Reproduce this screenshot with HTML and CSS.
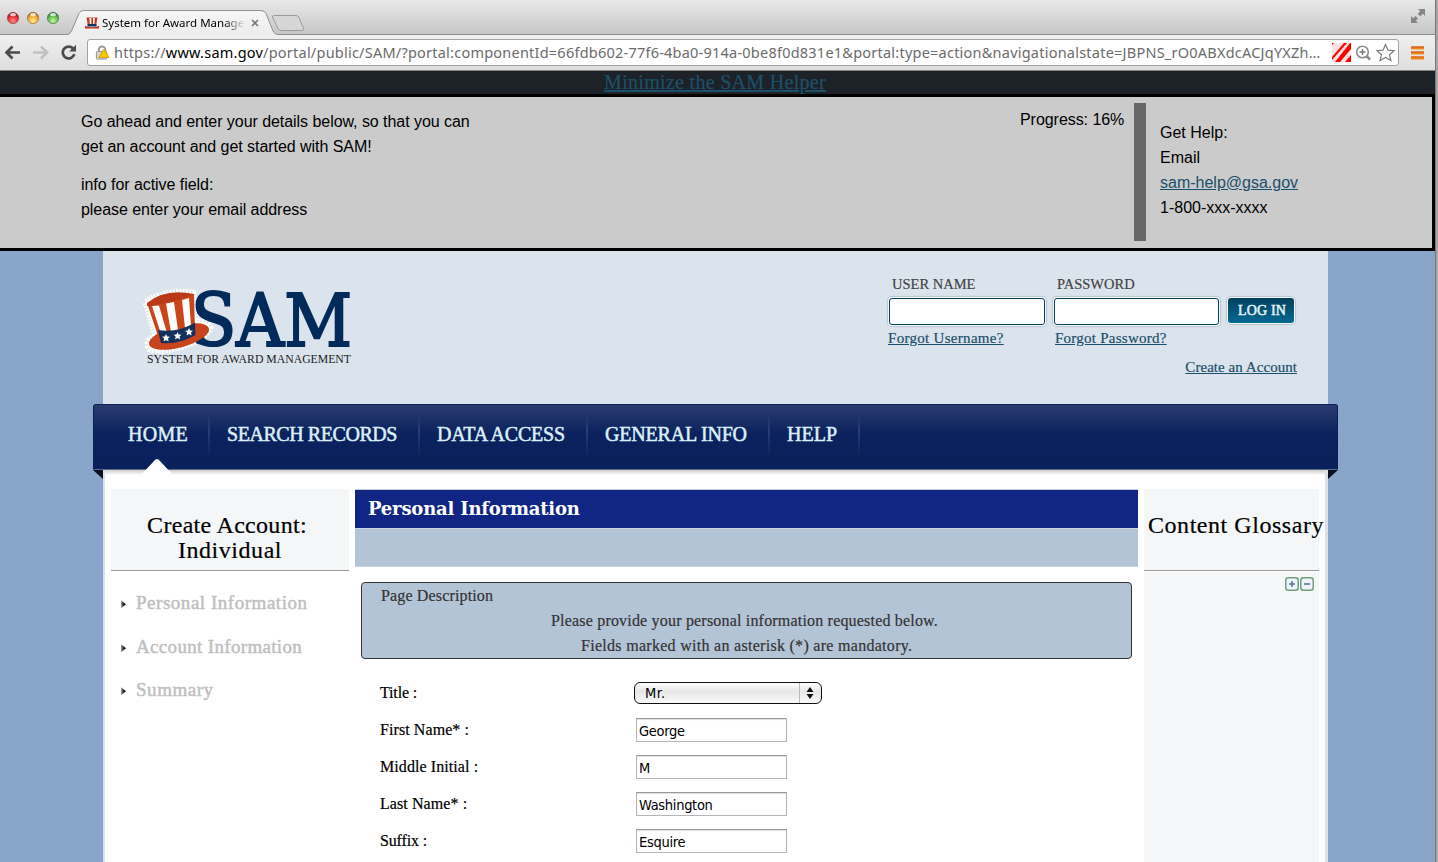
FILE: index.html
```html
<!DOCTYPE html>
<html lang="en">
<head>
<meta charset="utf-8">
<title>System for Award Management</title>
<link rel="stylesheet" href="styles.css">
</head>
<body>
<div class="window">
  <div class="tabstrip">
    <svg class="strip-art" width="330" height="35" viewBox="0 0 330 35">
      <defs>
        <radialGradient id="r" cx=".5" cy=".75" r=".7"><stop offset="0" stop-color="#ff8d86"/><stop offset=".6" stop-color="#e2303a"/><stop offset="1" stop-color="#8e1a1c"/></radialGradient>
        <radialGradient id="y" cx=".5" cy=".75" r=".7"><stop offset="0" stop-color="#ffee90"/><stop offset=".6" stop-color="#f4aa37"/><stop offset="1" stop-color="#a0601a"/></radialGradient>
        <radialGradient id="g" cx=".5" cy=".75" r=".7"><stop offset="0" stop-color="#c8f5a0"/><stop offset=".6" stop-color="#62bd50"/><stop offset="1" stop-color="#2f7430"/></radialGradient>
        <linearGradient id="tab" x1="0" y1="0" x2="0" y2="1"><stop offset="0" stop-color="#f6f6f6"/><stop offset="1" stop-color="#ececec"/></linearGradient>
      </defs>
      <circle cx="13" cy="18" r="5.7" fill="url(#r)" stroke="#8d4040" stroke-width=".6"/>
      <circle cx="33" cy="18" r="5.7" fill="url(#y)" stroke="#94662a" stroke-width=".6"/>
      <circle cx="53" cy="18" r="5.7" fill="url(#g)" stroke="#3b7339" stroke-width=".6"/>
      <ellipse cx="13" cy="14.6" rx="3" ry="1.6" fill="#fff" opacity=".75"/>
      <ellipse cx="33" cy="14.6" rx="3" ry="1.6" fill="#fff" opacity=".75"/>
      <ellipse cx="53" cy="14.6" rx="3" ry="1.6" fill="#fff" opacity=".75"/>
      <path d="M67 34.500Q70 34.500 71.500 31L79 13.500Q80.500 10.500 83.500 10.500H261Q264.500 10.500 266 13.500L273 31Q274.500 34.500 278 34.500V36H67Z" fill="url(#tab)"/>
      <path d="M0 34.500H67Q70 34.500 71.500 31L79 13.500Q80.500 10.500 83.500 10.500H261Q264.500 10.500 266 13.500L273 31Q274.500 34.500 278 34.500H330" fill="none" stroke="#8f8f8f"/>
      <path d="M274.500 15.500H296Q298 15.500 299 17.500L303.500 28.500Q304 30.500 302 30.500H281Q279 30.500 278 28.500L272.500 17.500Q272 15.500 274.500 15.500Z" fill="#d6d6d6" stroke="#9b9b9b"/>
      <path d="M86.500 17.500H97.500L96 26H88Z" fill="#c83a1c"/><path d="M89.500 18H91.300V25H89.800ZM93 18H94.800L94.300 25H93Z" fill="#fff"/><path d="M87.500 24H96.500V26.500H87.500Z" fill="#123464"/><path d="M85 26Q92 28.500 99 26V28.500H85Z" fill="#bb2f1a"/>
      <path d="M252 20L258 26M258 20L252 26" stroke="#777" stroke-width="1.600"/>
    </svg>
    <span class="tab-title">System for Award Manager</span>
    <svg class="expand" width="16" height="16" viewBox="0 0 16 16"><path d="M8 1H15V8L12.800 5.800L10.300 8.300L7.700 5.700L10.200 3.200ZM1 8L3.200 10.200L5.400 8L8 10.600L5.800 12.800L8 15H1Z" fill="#858585"/></svg>
  </div>
  <div class="toolbar">
    <svg class="nav-icons" width="82" height="24" viewBox="0 0 82 24">
      <path d="M12.500 5.500L6.500 11.500L12.500 17.500M7 11.500H20" fill="none" stroke="#4b4b4b" stroke-width="2.700"/>
      <path d="M41 5.500L47 11.500L41 17.500M46.500 11.500H33" fill="none" stroke="#c1c1c1" stroke-width="2.700"/>
      <path d="M73 7.500A5.900 5.900 0 1 0 74.300 13.200" fill="none" stroke="#4b4b4b" stroke-width="2.700"/><path d="M76 3.800V10.500H69.200Z" fill="#4b4b4b"/>
    </svg>
    <div class="omnibox">
      <svg width="16" height="16" viewBox="0 0 16 16"><path d="M4 7V4.500A3.500 3.500 0 0 1 11 4.500V7" fill="none" stroke="#999" stroke-width="2"/><rect x="1.500" y="6.500" width="11" height="8" rx="1" fill="#d9d9d9" stroke="#8b8b8b"/><path d="M9.500 3.800L15 12.800H4Z" fill="#f8c900" stroke="#d9a100"/></svg>
      <span class="url">https://<b>www.sam.gov</b>/portal/public/SAM/?portal:componentId=66fdb602-77f6-4ba0-914a-0be8f0d831e1&amp;portal:type=action&amp;navigationalstate=JBPNS_rO0ABXdcACJqYXZh…</span>
      <svg class="box-icons" width="64" height="20" viewBox="0 0 64 20">
        <rect x="0" y="0" width="19" height="19" fill="#f00"/><path d="M2 0H12L0 14V2ZM0 17L15 0H18L3 19H0ZM8 19L19 6V12L13 19Z" fill="#fff" opacity=".88"/>
        <circle cx="30.500" cy="9" r="5.800" fill="none" stroke="#8b8b8b" stroke-width="1.600"/><path d="M27.500 9H33.500M30.500 6V12" stroke="#777" stroke-width="1.400"/><path d="M34.800 13.300L38 16.500" stroke="#8b8b8b" stroke-width="2.600"/>
        <path d="M53.500 1.500L56 7.200L62 7.700L57.500 11.700L58.900 17.600L53.500 14.500L48.100 17.600L49.500 11.700L45 7.700L51 7.200Z" fill="#fff" stroke="#7c7c7c" stroke-width="1.200"/>
      </svg>
    </div>
    <svg width="14" height="14" viewBox="0 0 14 14"><path d="M0 .500H13V3.500H0ZM0 5.500H13V8.500H0ZM0 10.500H13V13.500H0Z" fill="#f08a1c"/><path d="M0 1H13M0 6H13M0 11H13" stroke="#d5500d"/></svg>
  </div>

  <div class="viewport">
    <div class="helper-bar"><a>Minimize the SAM Helper</a></div>
    <div class="helper">
      <div class="helper-copy">
        <p>Go ahead and enter your details below, so that you can<br>get an account and get started with SAM!</p>
        <p>info for active field:<br>please enter your email address</p>
      </div>
      <div class="progress">Progress: 16%</div>
      <div class="progress-rule"></div>
      <div class="help">Get Help:<br>Email<br><a>sam-help@gsa.gov</a><br>1-800-xxx-xxxx</div>
    </div>

    <div class="page">
      <header class="masthead">
        <svg class="logo" width="216" height="84" viewBox="0 0 216 84">
          <path d="M6 18Q25 6 53 9L56 38Q70 38 70 44Q60 61 24 66Q7 68 8 60Q9 55 16 52Z" fill="#fff" stroke="#fff" stroke-width="7" stroke-dasharray="2 1.200" stroke-linejoin="round"/>
          <text x="51" y="61.500" class="logo-name" textLength="161" lengthAdjust="spacingAndGlyphs">SAM</text>
          <ellipse cx="39" cy="52.500" rx="31" ry="11" transform="rotate(-15 39 52.500)" fill="#c8441c"/>
          <path d="M7 19Q28 7 54 10L55 48Q38 60 20 58Z" fill="#cb451b"/>
          <path d="M12 22L19 21.500L27 49L21 50ZM26 19.500L34 18L38 46L31 48ZM42 16L49 14L51 42L45 44Z" fill="#fff"/>
          <path d="M7 19Q25 4 54 10Q38 18 7 22Z" fill="#b93a17"/>
          <path d="M18 46Q38 49 55 38.500L55.500 51Q38 61 21 59Z" fill="#14305c"/>
          <path id="s" d="M26 50L27.200 52.600L30 52.800L28 54.600L28.600 57.400L26 56L23.600 57.400L24.200 54.600L22 52.800L24.900 52.600Z" fill="#fff"/>
          <use href="#s" x="11.500" y="-2"/><use href="#s" x="23" y="-6"/>
          <text x="7" y="79" class="logo-tag" textLength="204" lengthAdjust="spacingAndGlyphs">SYSTEM FOR AWARD MANAGEMENT</text>
        </svg>
        <div class="login">
          <div class="field user"><label>USER NAME</label><input type="text"><a>Forgot Username?</a></div>
          <div class="field pass"><label>PASSWORD</label><input type="text"><a>Forgot Password?</a></div>
          <div class="login-btn">LOG IN</div>
          <a class="create">Create an Account</a>
        </div>
      </header>
      <nav class="menu">
        <a class="home">HOME<svg class="pointer" width="34" height="18" viewBox="0 0 34 18"><path d="M17 1Q18 1 19 2L34 18H0L15 2Q16 1 17 1Z" fill="#fff"/></svg></a>
        <a class="search">SEARCH RECORDS</a>
        <a class="data">DATA ACCESS</a>
        <a class="info">GENERAL INFO</a>
        <a class="helplink">HELP</a>
        <span class="fold left"></span><span class="fold right"></span>
      </nav>
      <div class="content">
        <aside class="side">
          <h2>Create Account:<br><span class="ind">Individual</span></h2>
          <ul>
            <li><i></i>Personal Information</li>
            <li class="acct"><i></i>Account Information</li>
            <li><i></i>Summary</li>
          </ul>
        </aside>
        <main class="main">
          <h1>Personal Information</h1>
          <div class="subbar"></div>
          <section class="desc">
            <p class="d0">Page Description</p>
            <p class="d1">Please provide your personal information requested below.</p>
            <p class="d2">Fields marked with an asterisk (*) are mandatory.</p>
          </section>
          <form class="form">
            <div class="row"><label class="title">Title :</label><div class="select"><span>Mr.</span><svg width="22" height="20" viewBox="0 0 22 20"><path d="M.500 0V20" stroke="#bbb"/><path d="M11 4L14.500 9H7.500ZM11 16L14.500 11H7.500Z" fill="#111"/></svg></div></div>
            <div class="row"><label>First Name* :</label><input type="text" value="George"></div>
            <div class="row"><label>Middle Initial :</label><input type="text" value="M"></div>
            <div class="row"><label>Last Name* :</label><input type="text" value="Washington"></div>
            <div class="row"><label class="title">Suffix :</label><input type="text" value="Esquire"></div>
          </form>
        </main>
        <aside class="glossary">
          <h2>Content Glossary</h2>
          <div class="toggles">
            <svg width="30" height="14" viewBox="0 0 30 14"><g fill="#eef3fa" stroke="#6fa07a" stroke-width="1.500"><rect x=".8" y=".8" width="12.400" height="12.400" rx="2.500"/><rect x="15.800" y=".8" width="12.400" height="12.400" rx="2.500"/></g><path d="M4 7H10M7 4V10M19 7H25" stroke="#55708f" stroke-width="1.500"/></svg>
          </div>
        </aside>
      </div>
    </div>
  </div>
</div>
</body>
</html>
```

FILE: styles.css
```css
* { box-sizing: border-box; }
body { margin: 0; width: 1438px; height: 862px; overflow: hidden; background: #aaa5a3; font-family: "Liberation Serif", serif; }
p, h1, h2, ul { margin: 0; padding: 0; font-weight: normal; list-style: none; }
.window { width: 1436px; height: 862px; overflow: hidden; border-right: 1px solid #777; display: flex; flex-direction: column; }

/* browser frame */
.tabstrip { position: relative; height: 35px; flex: none; width: 1438px; background: linear-gradient(#e9e9e9, #c6c6c6); border-bottom: 1px solid #8f8f8f; }
.strip-art { position: absolute; left: 0; top: 0; }
.tab-title { position: absolute; left: 102px; top: 15px; width: 146px; white-space: nowrap; font: 11.5px/16px "Noto Sans", sans-serif; -webkit-mask-image: linear-gradient(90deg, #000 122px, transparent 143px); mask-image: linear-gradient(90deg, #000 122px, transparent 143px); }
.expand { position: absolute; left: 1410px; top: 8px; }
.toolbar { height: 36px; flex: none; display: flex; align-items: center; background: linear-gradient(#efefef, #dedede); border-bottom: 1px solid #858585; }
.nav-icons { flex: none; margin-right: 5px; }
.omnibox { width: 1312px; height: 27px; margin-right: 12px; padding: 0 2px 0 7px; display: flex; align-items: center; background: #fff; border: 1px solid #a2a2a2; border-radius: 3px; }
.url { width: 1209px; margin: 0 9px 1px 4px; flex: none; white-space: nowrap; font: 14.5px/20px "Noto Sans", sans-serif; letter-spacing: .228px; color: #6b6b6b; }
.url b { font-weight: normal; color: #000; }
.box-icons { flex: none; }

/* helper panel */
.viewport { width: 1435px; flex: 1; background: repeating-conic-gradient(#8ba1c2 0 25%, #85a9d0 0 50%) 0 0 / 4px 4px; }
.helper-bar { height: 23px; background: #1c2228; text-align: center; padding-right: 5px; }
.helper-bar a { font-size: 20px; line-height: 23px; letter-spacing: .3px; color: #1c5068; text-decoration: underline; -webkit-text-stroke: .2px #1c5068; }
.helper { height: 157px; border: 3px solid #000; border-left: 0; background: #cbcbcb; display: flex; font: 16px/25px "Liberation Sans", sans-serif; color: #000; }
.helper-copy { width: 1020px; padding: 12px 0 0 81px; letter-spacing: -.05px; }
.helper-copy p { margin-bottom: 13px; }
.progress { width: 114px; padding-top: 10px; white-space: nowrap; letter-spacing: -.05px; }
.progress-rule { width: 12px; height: 138px; margin: 6px 14px 0 0; background: #666; }
.help { padding-top: 23px; }
.help a { color: #1b4f6b; text-decoration: underline; }

/* header */
.page { width: 1225px; margin-left: 103px; }
.masthead { height: 153px; background: #dbe3ec; display: flex; justify-content: space-between; padding: 33px 31px 0 37px; }
.logo { overflow: visible; }
.logo-name { font: 72px "DejaVu Serif", serif; fill: #022b5b; stroke: #022b5b; stroke-width: 2.2px; }
.logo-tag { font: 12px "Liberation Serif", serif; fill: #1c1c24; }
.login { width: 410px; display: grid; grid-template-columns: 166px 173px 71px; grid-template-rows: 70px 30px; align-content: start; margin-top: -9px; }
.field { display: flex; flex-direction: column; align-items: flex-start; font-size: 14.5px; color: #444; }
.field label { line-height: 18px; margin: 0 0 5px 5px; -webkit-text-stroke: .2px #444; }
.field input { flex: none; width: 156px; height: 27px; margin-left: 2px; border: 1px solid #06405c; border-radius: 3px; background: #fff; box-shadow: 0 0 0 1px #f4f7fa, 0 0 1px 2px #b9c5d2; }
.field.pass input { width: 165px; margin-left: 1px; }
.field.pass label { margin-left: 4px; }
.field.pass a { margin-left: 2px; letter-spacing: .25px; }
.field.user a { margin-left: 1px; letter-spacing: .3px; }
.login a { font-size: 15px; line-height: 18px; color: #1b4f6b; text-decoration: underline; white-space: nowrap; -webkit-text-stroke: .2px #1b4f6b; }
.field a { margin-top: 4px; }
.login-btn { height: 25px; width: 66px; margin: 23px 0 0 2px; text-align: center; padding-left: 2px; font-size: 14px; line-height: 26px; letter-spacing: .2px; color: #e6f4f8; -webkit-text-stroke: .5px #e6f4f8; background: linear-gradient(#04405d, #046a96); border-radius: 3px; box-shadow: 0 0 0 1px #f4f7fa, 0 0 1px 2px #b9c5d2; }
.create { grid-column: 1 / 4; justify-self: end; padding-top: 13px; letter-spacing: .05px; }

/* menu */
.menu { position: relative; z-index: 1; height: 66px; width: 1245px; margin-left: -10px; padding-left: 18px; display: flex; background: linear-gradient(#2b3c70, #0b225e 45%, #0a205b); border: 1px solid #0a1f59; border-bottom-color: #5a6a92; border-radius: 3px 3px 0 0; }
.menu a { position: relative; height: 52px; padding-left: 17px; line-height: 59px; font-size: 20px; color: #dceff6; -webkit-text-stroke: .5px #dceff6; white-space: nowrap; border-right: 2px solid; border-image: linear-gradient(transparent 10%, #2b3e74 50%, transparent) 1; }
.menu .home { width: 98px; padding-left: 16px; letter-spacing: .27px; }
.menu .search { width: 210px; letter-spacing: -.44px; }
.menu .data { width: 168px; letter-spacing: -.2px; }
.menu .info { width: 182px; letter-spacing: -.2px; }
.menu .helplink { width: 90px; }
.pointer { position: absolute; left: 28px; top: 53px; }
.fold { position: absolute; top: 65px; width: 10px; height: 9px; background: #0b1020; }
.fold.left { left: -1px; clip-path: polygon(0 0, 100% 0, 100% 100%); }
.fold.right { right: -1px; clip-path: polygon(0 0, 100% 0, 0 100%); }

/* content */
.content { height: 400px; padding: 19px 6px 0 6px; display: flex; gap: 6px; background: linear-gradient(#cfcbc8, #fff 5px); border-left: 2px solid #dbe1e8; border-right: 3px solid #dbe1e8; }
.side { width: 238px; flex: none; }
h2 { height: 82px; padding-top: 24px; background: #f4f6f8; border-bottom: 1px solid #999; font-size: 24px; line-height: 25px; letter-spacing: .3px; text-align: center; color: #000; -webkit-text-stroke: .2px #000; }
.side h2 { padding-right: 6px; }
.ind { letter-spacing: .55px; margin-left: 6px; }
.side li { display: flex; align-items: center; height: 43.500px; font-size: 19px; letter-spacing: .53px; color: #bfbfbf; -webkit-text-stroke: .5px #bfbfbf; }
.side ul { padding-top: 10px; }
.side .acct { letter-spacing: .33px; padding-top: 1px; }
.side i { width: 5px; height: 8px; margin: 3px 10px 0 10px; background: linear-gradient(90deg, #aaa, #111 60%); clip-path: polygon(0 0, 100% 50%, 0 100%); }
.main { width: 783px; flex: none; }
h1 { height: 39px; padding-left: 13px; border-top: 1px solid #c5cbd3; background: #112585; color: #fff; font: bold 18px/37px "DejaVu Serif", serif; letter-spacing: -.2px; }
.subbar { height: 39px; background: #b3c4d7; border-top: 1px solid #d0d7e0; border-bottom: 1px solid #c8d0da; }
.desc { width: 771px; height: 77px; margin: 15px 0 15px 6px; border: 1px solid #333; border-radius: 4px; background: #b3c4d7; font-size: 16px; line-height: 25px; color: #333; -webkit-text-stroke: .2px #333; }
.d0 { padding-left: 19px; letter-spacing: .15px; }
.d1 { padding-left: 189px; letter-spacing: .19px; }
.d2 { padding-left: 219px; letter-spacing: .29px; }
.row { display: flex; align-items: center; height: 37px; padding-left: 25px; font-size: 16px; color: #000; }
.row label { width: 256px; letter-spacing: .08px; -webkit-text-stroke: .2px #000; }
.row .title { letter-spacing: -.15px; }
.row input { width: 151px; height: 24px; padding: 2px 2px 0; border: 1px solid #b5b5b5; border-top-color: #999; box-shadow: inset 0 1px 1px #ddd; font: 14.5px "DejaVu Sans Condensed", sans-serif; letter-spacing: -.3px; }
.select { width: 188px; height: 22px; margin-left: -2px; padding-left: 10px; display: flex; justify-content: space-between; align-items: center; border: 1.500px solid #111; border-radius: 6px; background: linear-gradient(#fff, #e6e6e6 40%, #fafafa); font: 14.5px "DejaVu Sans Condensed", sans-serif; letter-spacing: .4px; }
.glossary { width: 175px; flex: none; background: #f4f6f8; }
.glossary h2 { padding-left: 4px; letter-spacing: .54px; white-space: nowrap; text-align: left; }
.toggles { padding: 5px 4px 0 0; text-align: right; line-height: 0; border-top: 1px solid #fff; }
```
